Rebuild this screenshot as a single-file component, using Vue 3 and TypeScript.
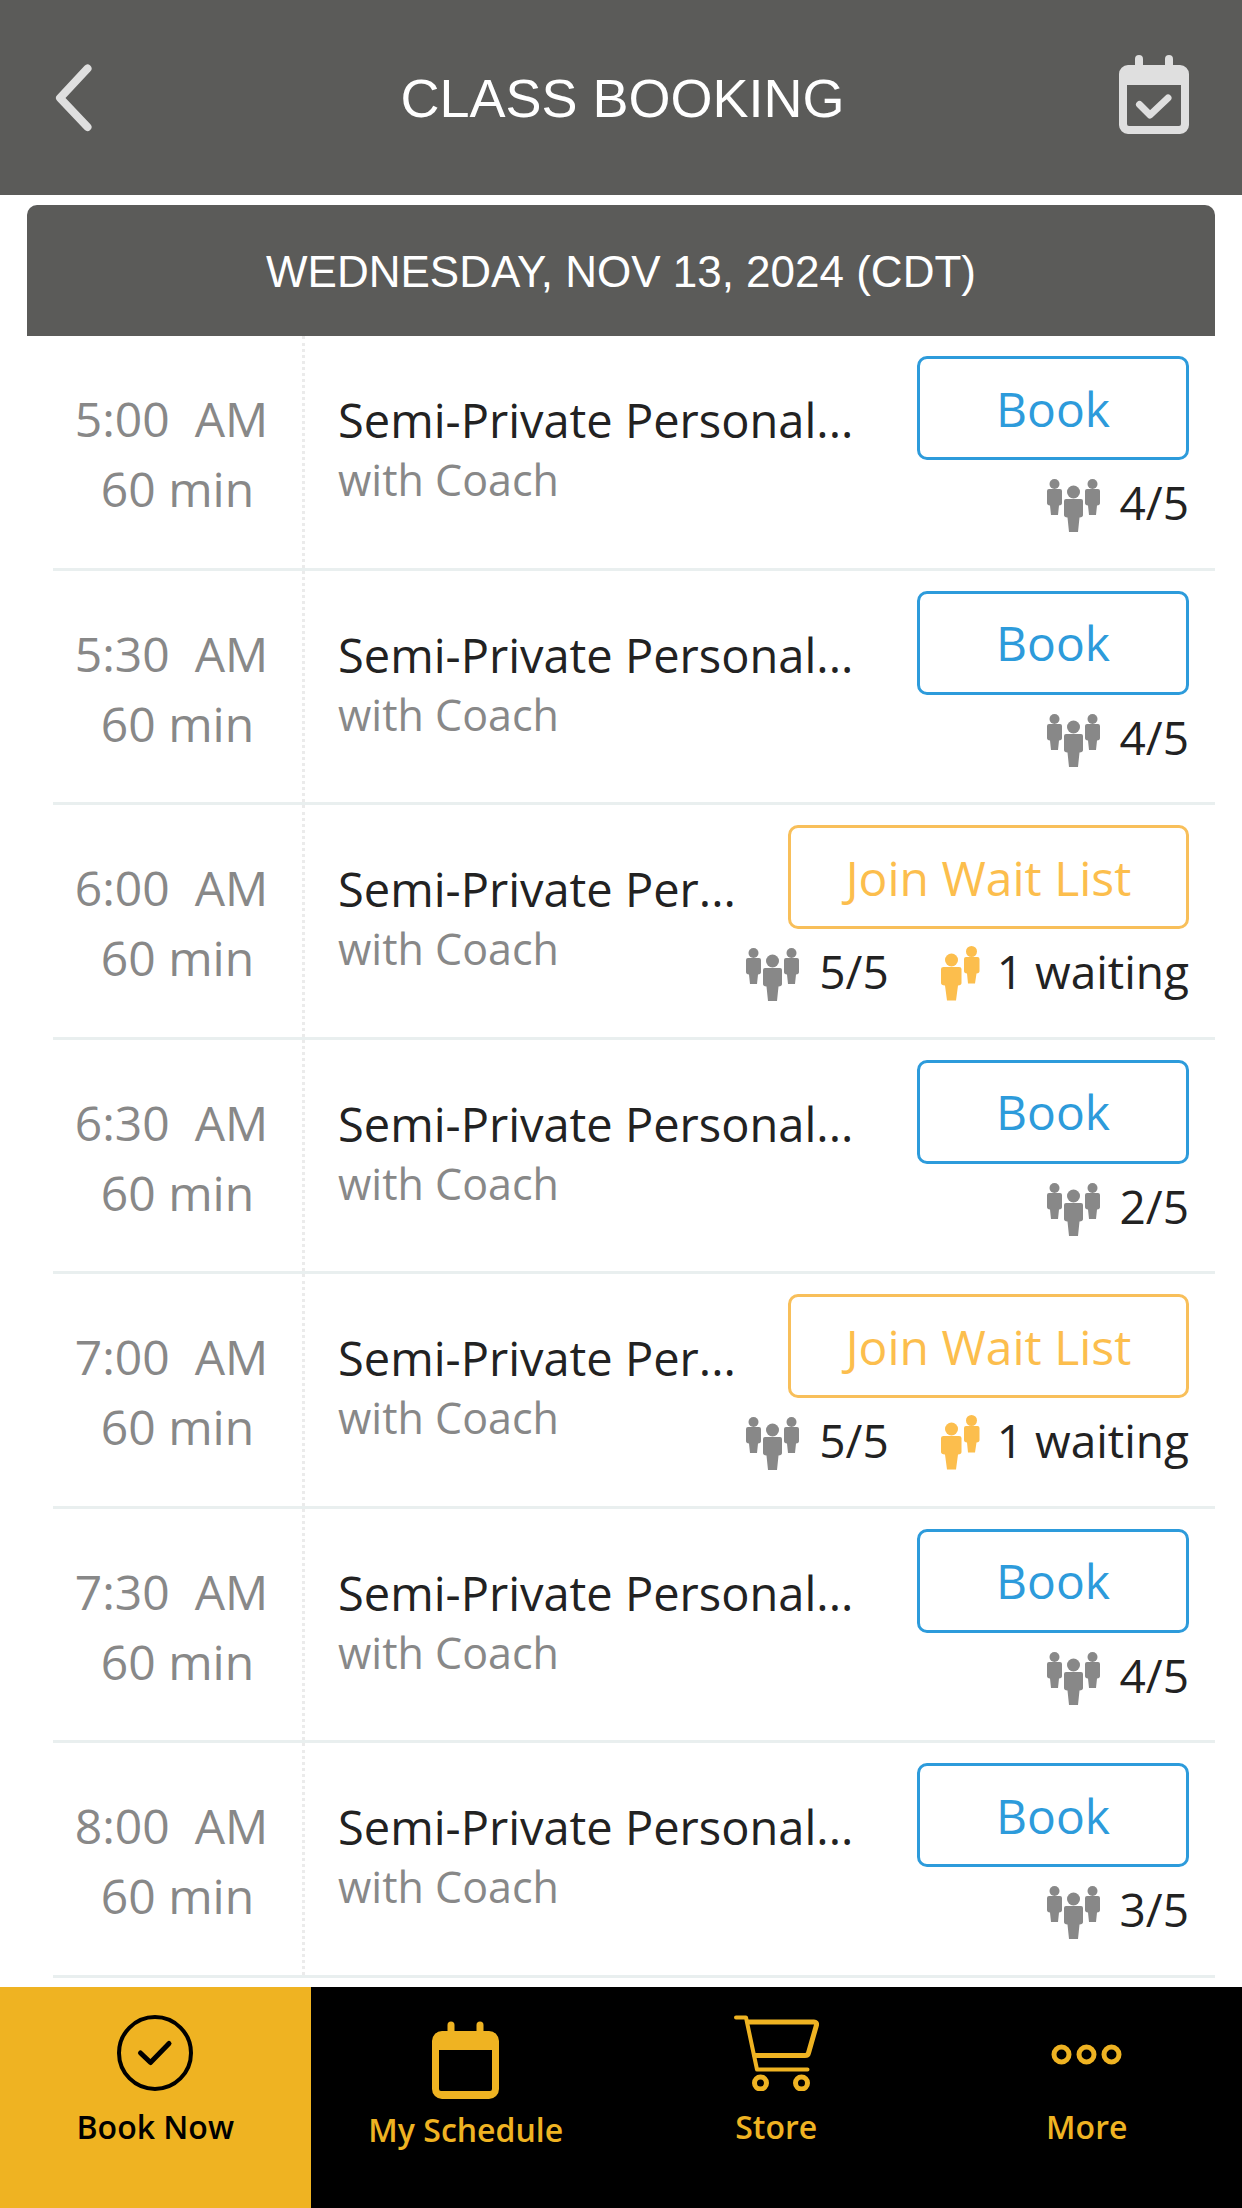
<script setup lang="ts">
interface ClassSlot {
  time: string
  title: string
  booked: string
  waiting?: string
}

interface Tab {
  id: 'book' | 'schedule' | 'store' | 'more'
  label: string
}

const full = 'Semi-Private Personal...'
const short = 'Semi-Private Per...'

const slots: ClassSlot[] = [
  { time: '5:00', title: full, booked: '4/5' },
  { time: '5:30', title: full, booked: '4/5' },
  { time: '6:00', title: short, booked: '5/5', waiting: '1 waiting' },
  { time: '6:30', title: full, booked: '2/5' },
  { time: '7:00', title: short, booked: '5/5', waiting: '1 waiting' },
  { time: '7:30', title: full, booked: '4/5' },
  { time: '8:00', title: full, booked: '3/5' },
]

const tabs: Tab[] = [
  { id: 'book', label: 'Book Now' },
  { id: 'schedule', label: 'My Schedule' },
  { id: 'store', label: 'Store' },
  { id: 'more', label: 'More' },
]
</script>

<template>
  <div class="page">
    <header class="topbar">
      <button class="icon-button" type="button" aria-label="Back">
        <svg width="37" height="68" viewBox="0 0 37 68" fill="none">
          <path d="M32.500 4.500 5 34 32.500 63" stroke="#dfdfdf" stroke-width="8" stroke-linecap="round" stroke-linejoin="round" />
        </svg>
      </button>
      <h1>CLASS BOOKING</h1>
      <button class="icon-button calendar" type="button" aria-label="My bookings">
        <svg width="71" height="79" viewBox="0 0 71 79" fill="none">
          <path fill-rule="evenodd" fill="#dfdfdf" d="M9 10H16V4a4 4 0 0 1 8 0V10H46V4a4 4 0 0 1 8 0V10H61a9 9 0 0 1 9 9V70a9 9 0 0 1-9 9H9a9 9 0 0 1-9-9V19a9 9 0 0 1 9-9ZM8 30V69q0 2 2 2H60q2 0 2-2V30Z" />
          <path d="M20.500 49.500 31 60 49 43" stroke="#dfdfdf" stroke-width="7" stroke-linecap="round" stroke-linejoin="round" />
        </svg>
      </button>
    </header>

    <main class="schedule">
      <h2>WEDNESDAY, NOV 13, 2024 (CDT)</h2>
      <ul class="slots">
        <li v-for="slot in slots" :key="slot.time" class="slot">
          <div class="when">
            <div class="start">{{ slot.time }}&nbsp; AM</div>
            <div>60 min</div>
          </div>
          <div class="details">
            <div class="title">{{ slot.title }}</div>
            <div class="coach">with Coach</div>
          </div>
          <div class="action">
            <button v-if="slot.waiting" class="cta wait" type="button">Join Wait List</button>
            <button v-else class="cta" type="button">Book</button>
            <div class="counts">
              <span class="count">
                <svg width="53" height="53" viewBox="0 0 53 53" fill="#888">
                  <circle cx="7.500" cy="5" r="5" />
                  <path d="M2 10H13q2 0 2 2V24q0 2-3 2.500L11 36H4L3 26.500Q0 26 0 24V12q0-2 2-2Z" />
                  <circle cx="45.500" cy="5" r="5" />
                  <path d="M40 10H51q2 0 2 2V24q0 2-3 2.500L49 36H42L41 26.500Q38 26 38 24V12q0-2 2-2Z" />
                  <circle cx="26.500" cy="13" r="6.500" />
                  <path d="M19 20H34q2 0 2 2V36q0 2-3.500 2.500L31 53H22L20.500 38.500Q17 38 17 36V22q0-2 2-2Z" />
                </svg>
                {{ slot.booked }}
              </span>
              <span v-if="slot.waiting" class="count queue">
                <svg width="39" height="55" viewBox="0 0 39 55" fill="#fcbe4d">
                  <circle cx="30.500" cy="5.500" r="5.500" />
                  <path d="M25 11H36.500q2 0 2 2V25q0 2-3 2.500L34 37.500H27L26 27.500Q23 27 23 25V13q0-2 2-2Z" />
                  <circle cx="10.500" cy="14" r="6.500" />
                  <path d="M2.500 21H18q2.500 0 2.500 2V37q0 2-3.500 2.500L15 54.500H6L4 39.500Q0 39 0 37V23q0-2 2.500-2Z" />
                </svg>
                {{ slot.waiting }}
              </span>
            </div>
          </div>
        </li>
      </ul>
    </main>

    <nav class="tabs">
      <a v-for="tab in tabs" :key="tab.id" href="#" class="tab" :class="{ active: tab.id === 'book' }">
        <svg v-if="tab.id === 'book'" width="76" height="76" viewBox="0 0 76 76" fill="none" stroke="currentColor">
          <circle cx="38" cy="38" r="36" stroke-width="4" />
          <path d="M23.500 38 33.500 47.500 52 28.500" stroke-width="5" stroke-linecap="round" stroke-linejoin="round" />
        </svg>
        <svg v-else-if="tab.id === 'schedule'" class="tall" width="67" height="79" viewBox="0 0 67 79" fill="currentColor">
          <path fill-rule="evenodd" d="M10 16H15.500V10a3.500 3.500 0 0 1 7 0V16H44.500V10a3.500 3.500 0 0 1 7 0V16H57a10 10 0 0 1 10 10V74a10 10 0 0 1-10 10H10a10 10 0 0 1-10-10V26a10 10 0 0 1 10-10ZM7 35V74q0 2 2 2H58q2 0 2-2V35Z" />
        </svg>
        <svg v-else-if="tab.id === 'store'" width="86" height="76" viewBox="0 0 86 76" fill="none" stroke="currentColor" stroke-width="5" stroke-linecap="round" stroke-linejoin="round">
          <path d="M3 2.500H13L24 54.500H74.500" stroke-width="4" />
          <path d="M15 7H81Q84 7 83.500 10L75.500 38Q75 40.500 72 40.500H22" />
          <circle cx="27.500" cy="68" r="6" />
          <circle cx="68.500" cy="68" r="6" />
        </svg>
        <svg v-else width="71" height="76" viewBox="0 0 71 76" fill="none" stroke="currentColor" stroke-width="5">
          <circle cx="10.500" cy="39.500" r="7.500" />
          <circle cx="35.500" cy="39.500" r="7.500" />
          <circle cx="60.500" cy="39.500" r="7.500" />
        </svg>
        <span>{{ tab.label }}</span>
      </a>
    </nav>
  </div>
</template>

<style>
body {
  background: #fff;
}
</style>

<style scoped>
* {
  box-sizing: border-box;
}

svg {
  display: block;
  flex: none;
}

.page {
  display: flex;
  flex-direction: column;
  min-height: 100vh;
  font-family: "Open Sans", "Noto Sans", sans-serif;
}

.topbar {
  display: flex;
  align-items: center;
  justify-content: space-between;
  height: 195px;
  padding: 0 52px 0 55px;
  background: #5b5b59;
}

.icon-button {
  display: flex;
  width: 71px;
  padding: 0;
  border: 0;
  background: none;
}

.calendar {
  padding-bottom: 6px;
}

h1,
h2 {
  margin: 0;
  color: #fff;
  font-family: "Liberation Sans", Arial, sans-serif;
  font-weight: 300;
  text-align: center;
}

h1 {
  font-size: 54px;
  line-height: 60px;
}

.schedule {
  display: flex;
  flex: 1;
  flex-direction: column;
  padding: 10px 27px 9px;
}

h2 {
  padding: 39px 0 36px;
  border-radius: 10px 10px 0 0;
  background: #5b5b59;
  font-size: 44px;
  line-height: 56px;
}

.slots {
  display: grid;
  flex: 1;
  grid-auto-rows: 1fr;
  margin: 0;
  padding: 0 0 0 26px;
  list-style: none;
}

.slot {
  display: grid;
  grid-template-columns: 252px 1fr auto;
  border-bottom: 3px solid #e9efef;
}

.when {
  padding-top: 48px;
  border-right: 3px dotted #ebebeb;
  color: #888;
  font-size: 48px;
  line-height: 70px;
  text-align: center;
}

.start {
  padding-right: 12px;
}

.details {
  min-width: 0;
  padding: 52px 0 0 33px;
  white-space: nowrap;
}

.title {
  color: #222;
  font-size: 47px;
  line-height: 64px;
}

.coach {
  color: #888;
  font-size: 43px;
  line-height: 56px;
}

.action {
  display: flex;
  flex-direction: column;
  align-items: flex-end;
  padding: 20px 26px 0 0;
}

.cta {
  width: 272px;
  height: 104px;
  padding: 0;
  border: 3px solid #2d9bdb;
  border-radius: 10px;
  background: #fff;
  color: #2d9bdb;
  font: 48px "Open Sans", "Noto Sans", sans-serif;
}

.cta.wait {
  width: 401px;
  border-color: #f8bf5a;
  color: #fcbe4d;
}

.counts {
  display: flex;
  gap: 52px;
  margin-top: 12px;
}

.count {
  display: flex;
  align-items: flex-end;
  gap: 20px;
  color: #222;
  font-size: 46px;
  line-height: 60px;
}

.queue {
  gap: 17px;
}

.tabs {
  position: sticky;
  bottom: 0;
  display: grid;
  grid-template-columns: repeat(4, 1fr);
  min-height: 221px;
  background: #000;
}

.tab {
  display: flex;
  flex-direction: column;
  align-items: center;
  gap: 14px;
  padding-top: 28px;
  color: #efb322;
  font-size: 32px;
  font-weight: 600;
  line-height: 44px;
  text-decoration: none;
}

.tab.active {
  background: #efb322;
  color: #000;
}

.tall {
  overflow: visible;
}
</style>
